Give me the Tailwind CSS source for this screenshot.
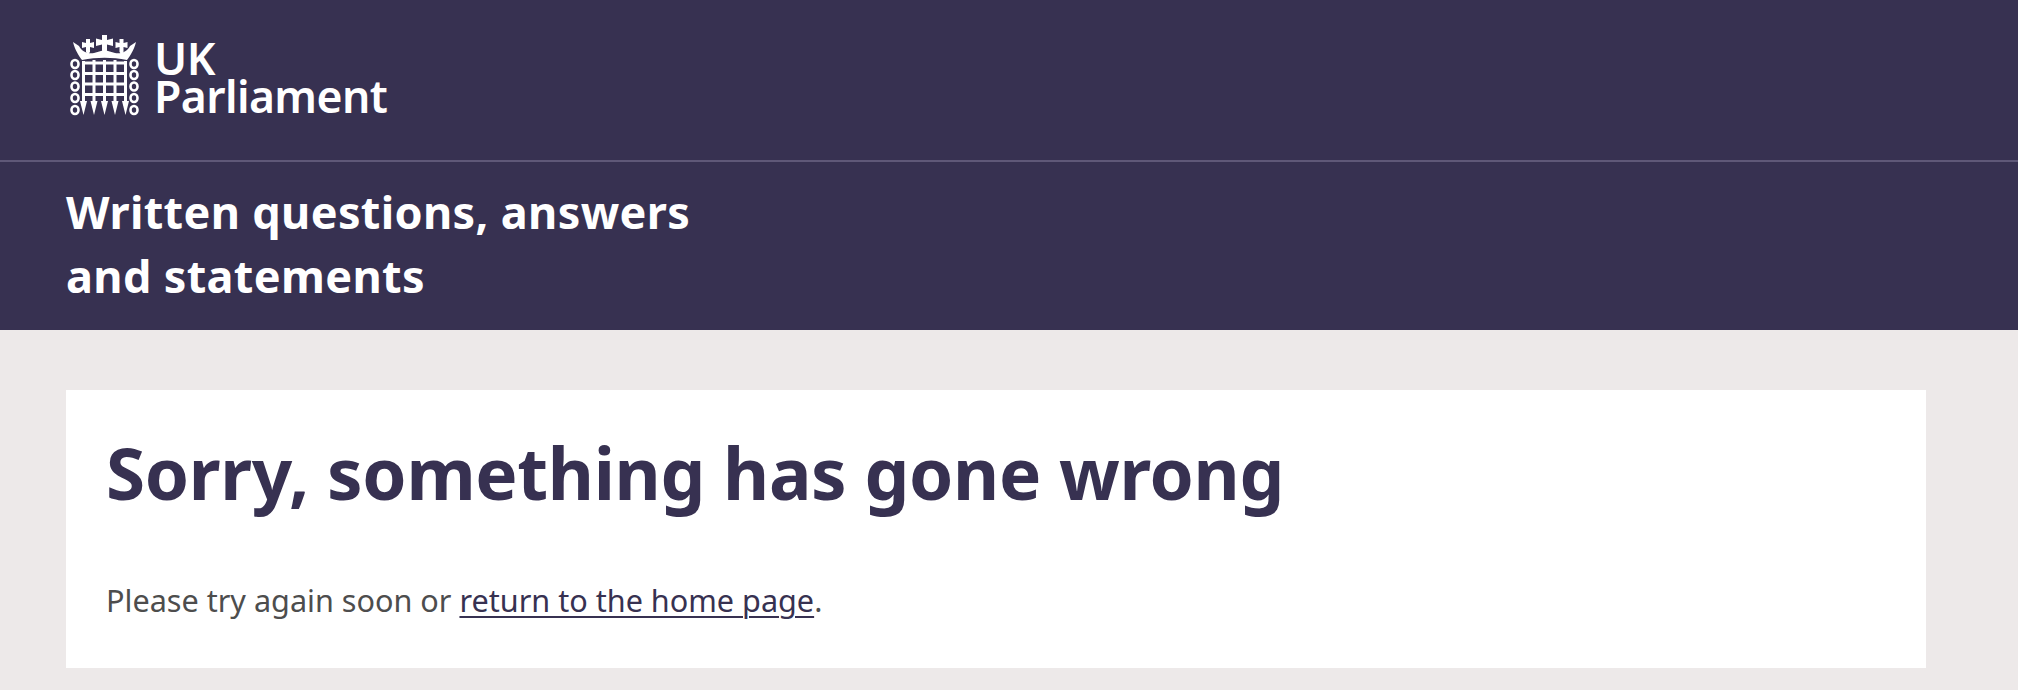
<!DOCTYPE html>
<html lang="en">
<head>
    <meta charset="UTF-8">
    <meta name="viewport" content="width=device-width, initial-scale=1.0">
    <title>Sorry, something has gone wrong</title>
    <script src="https://cdn.jsdelivr.net/npm/@tailwindcss/browser@4"></script>
</head>
<body class="bg-[#ede9e9] min-h-screen overflow-hidden font-['Noto_Sans',sans-serif]">
    <header class="bg-[#373151] h-[330px] text-white">
        <div class="h-[162px] border-b-2 border-[#5f5878] flex items-start pl-[70px] pt-[34px] gap-[14px]">
            <!-- portcullis crest -->
            <svg width="70" height="82" viewBox="0 0 70 82" class="shrink-0" fill="#fff">
                <path d="M32 1h5v5l6-1.500v7.500l-6-1.500v6l-2.500 3.500-2.500-3.500v-6l-6 1.500V4.500l6 1.500z"/>
                <path d="M16 5h4v4l4-1v6l-4-1v5l-2 2.500-2-2.500v-5l-4 1V8l4 1zM49.500 5h4v4l4-1v6l-4-1v5l-2 2.500-2-2.500v-5l-4 1V8l4 1z"/>
                <path d="M3 8l6 4c3 6 9 8 15 7l10.500-3 10.500 3c6 1 12-1 15-7l6-4c-2 8-6 14-9 18-15-3-30-3-45 0-3-4-7-10-9-18z"/>
                <g fill="none" stroke="#fff" stroke-width="2.600">
                    <ellipse cx="5" cy="30" rx="3.500" ry="4"/><ellipse cx="5" cy="41" rx="3.500" ry="4"/><ellipse cx="5" cy="52.500" rx="3.500" ry="4"/><ellipse cx="5" cy="64" rx="3.500" ry="4"/><ellipse cx="5" cy="76" rx="3.500" ry="4"/>
                    <ellipse cx="64" cy="30" rx="3.500" ry="4"/><ellipse cx="64" cy="41" rx="3.500" ry="4"/><ellipse cx="64" cy="52.500" rx="3.500" ry="4"/><ellipse cx="64" cy="64" rx="3.500" ry="4"/><ellipse cx="64" cy="76" rx="3.500" ry="4"/>
                </g>
                <g fill="none" stroke="#fff" stroke-width="3">
                    <path d="M13.500 27v46M24 26v47M34.500 26v47M45 26v47M55.500 27v46"/>
                    <path d="M12 29h45M12 39.500h45M12 50h45M12 60.500h45"/>
                </g>
                <path d="M10 67h7l-3.500 14zM20.500 67h7l-3.500 14zM31 67h7l-3.500 14zM41.500 67h7l-3.500 14zM52 67h7l-3.500 14z"/>
            </svg>
            <div class="text-[44.500px] leading-[38px] font-semibold tracking-[-0.6px] mt-[5px]">UK<br>Parliament</div>
        </div>
        <div class="pl-[66px] pt-[18px] text-[45px] leading-[64px] font-bold tracking-[0.35px]">Written questions, answers<br>and statements</div>
    </header>
    <main class="pl-[66px] pt-[60px] pr-[92px]">
        <section class="bg-white h-[278px] pl-[40px] pt-[38px]">
            <h1 class="text-[71px] leading-[90px] font-bold tracking-[-0.33px] text-[#373151]">Sorry, something has gone wrong</h1>
            <p class="mt-[60px] text-[30.600px] leading-[44px] text-[#4d4d4d]">Please try again soon or <a href="#" class="text-[#373151] underline underline-offset-4 decoration-2">return to the home page</a>.</p>
        </section>
    </main>
</body>
</html>
